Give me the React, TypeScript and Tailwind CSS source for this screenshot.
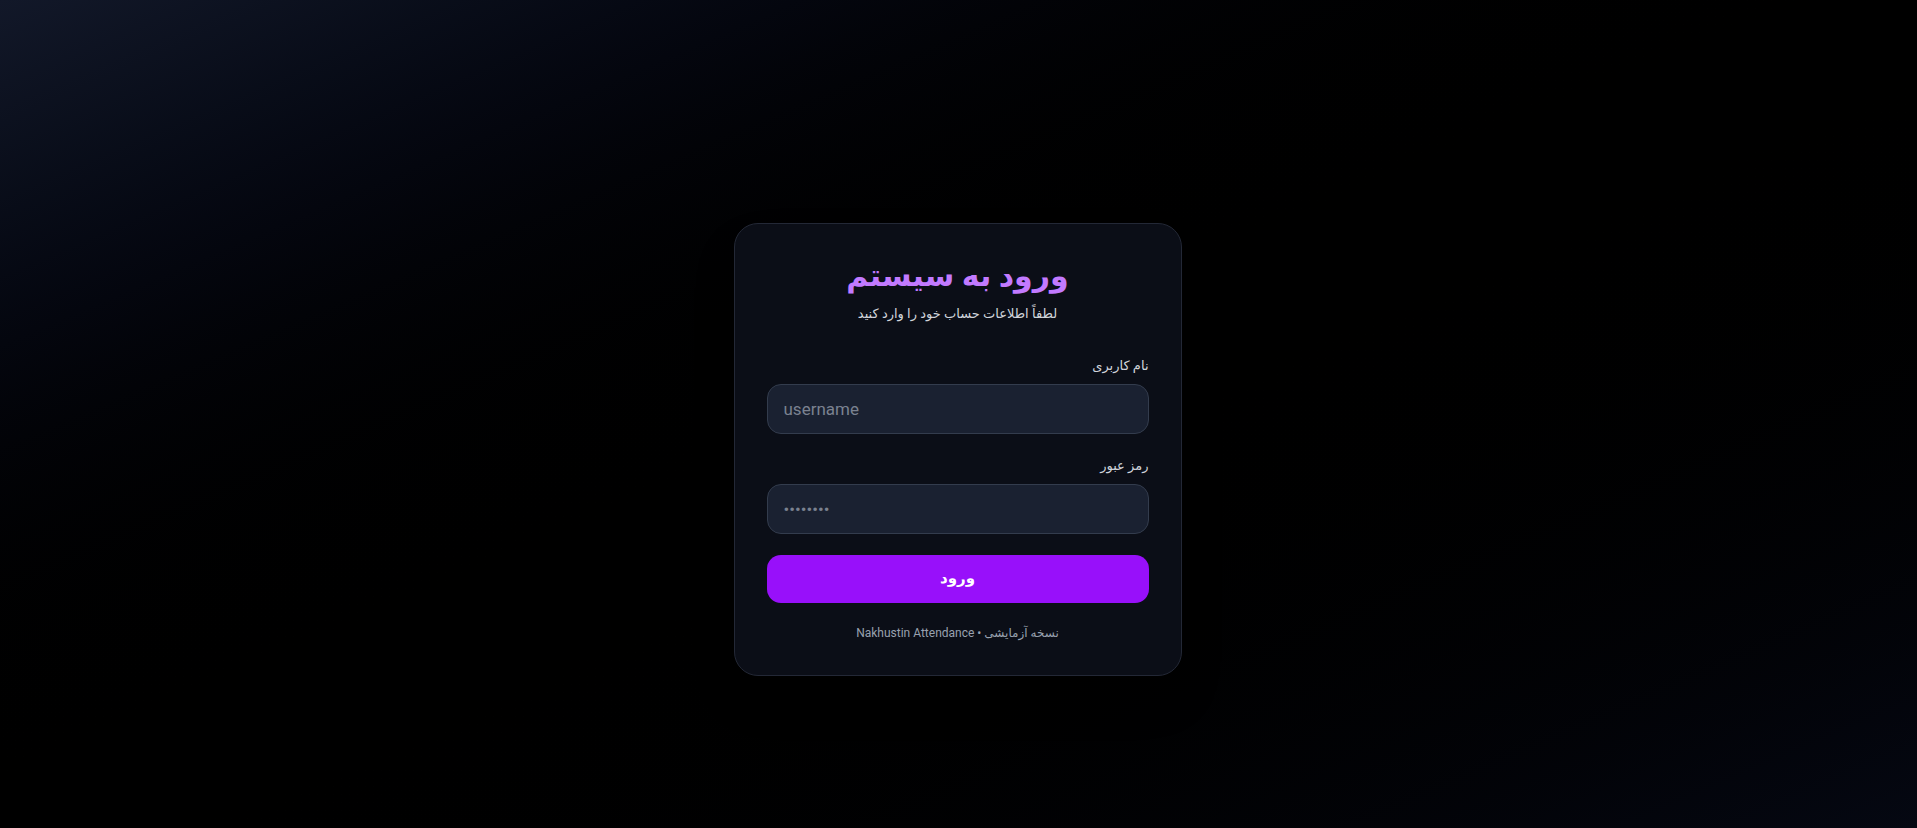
import React from "react";

const font = { fontFamily: 'Roboto, "DejaVu Sans", sans-serif' };

function Field({
  label,
  type,
  placeholder,
  first,
}: {
  label: string;
  type: string;
  placeholder: string;
  first?: boolean;
}) {
  return (
    <div className={first ? "mt-8" : "mt-[22px]"}>
      <label className="mb-2 block text-right text-[13px] leading-5 text-gray-300">
        {label}
      </label>
      <input
        dir="ltr"
        type={type}
        placeholder={placeholder}
        className="block h-[50px] w-full rounded-[14px] border border-[#333c4d] bg-[#1a2131] px-4 text-[17px] text-gray-200 placeholder:text-[#7b8290] outline-none"
        style={font}
      />
    </div>
  );
}

export default function App() {
  return (
    <div
      dir="rtl"
      className="flex h-[828px] w-full items-center justify-center bg-gradient-to-br from-[#121829] via-black to-[#050812] pt-[70px] pr-[2px]"
      style={font}
    >
      <div className="w-[448px] rounded-3xl border border-[#232836] bg-[#0b0e17] px-8 pt-8 pb-8 shadow-2xl">
        <h1 className="text-center text-[30px] leading-10 font-bold text-[#c27aff]">
          ورود به سیستم
        </h1>
        <p className="mt-2 text-center text-[13px] leading-5 text-gray-300">
          لطفاً اطلاعات حساب خود را وارد کنید
        </p>

        <Field first label="نام کاربری" type="text" placeholder="username" />
        <Field label="رمز عبور" type="password" placeholder="••••••••" />

        <button className="mt-[21px] h-12 w-full rounded-[14px] bg-[#9810fa] text-[15px] font-bold text-white">
          ورود
        </button>

        <p className="mt-5 text-center text-[12px] leading-5 text-gray-400">
          نسخه آزمایشی • Nakhustin Attendance
        </p>
      </div>
    </div>
  );
}
